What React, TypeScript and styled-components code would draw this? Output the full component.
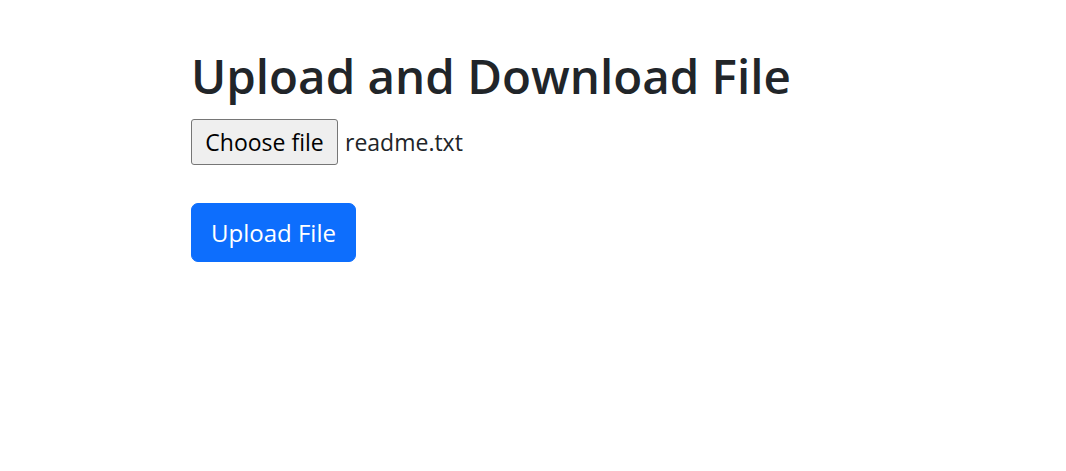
import React from "react";
import styled, { createGlobalStyle } from "styled-components";

const Global = createGlobalStyle`
  html, body { margin: 0; padding: 0; background: #fff; }
  body {
    font-family: "Open Sans", "Noto Sans", sans-serif;
    color: #212529;
  }
`;

const Container = styled.div`
  padding: 47px 0 0 191px;
  display: flex;
  flex-direction: column;
  align-items: flex-start;
`;

const Title = styled.h1`
  margin: 0;
  font-size: 47.5px;
  font-weight: 600;
  line-height: 57.6px;
  color: #212529;
`;

const FileRow = styled.div`
  display: flex;
  align-items: center;
  gap: 7px;
  margin-top: 14px;
`;

const ChooseButton = styled.button`
  height: 46px;
  width: 147px;
  padding: 0;
  font-family: inherit;
  font-size: 23px;
  color: #000;
  background: #efefef;
  border: 1px solid #767676;
  border-radius: 3px;
`;

const FileName = styled.span`
  font-size: 23px;
  color: #212529;
`;

const UploadButton = styled.button`
  margin-top: 38px;
  height: 59px;
  width: 165px;
  padding: 0;
  font-family: inherit;
  font-size: 24px;
  color: #fff;
  background: #0d6efd;
  border: 1px solid #0d6efd;
  border-radius: 7px;
`;

export default function App() {
  return (
    <>
      <Global />
      <Container>
        <Title>Upload and Download File</Title>
        <FileRow>
          <ChooseButton type="button">Choose file</ChooseButton>
          <FileName>readme.txt</FileName>
        </FileRow>
        <UploadButton type="button">Upload File</UploadButton>
      </Container>
    </>
  );
}
